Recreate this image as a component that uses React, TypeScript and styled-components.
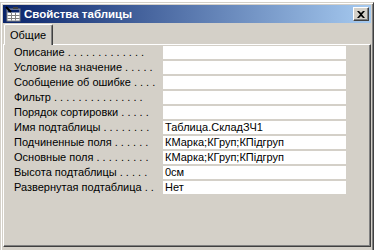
import { Fragment } from "react";
import styled, { createGlobalStyle } from "styled-components";

const GlobalStyle = createGlobalStyle`
    html, body {
        margin: 0;
        padding: 0;
        background: #ffffff;
        overflow: hidden;
    }
    body {
        font-family: "Liberation Sans", Arial, sans-serif;
        font-size: 11px;
        color: #000000;
    }
`

const Window = styled.div`
    margin-top: 2px;
    width: 374px;
    height: 248px;
    box-sizing: border-box;
    background: #d4d0c8;
    border-top: 1px solid #d4d0c8;
    border-left: 1px solid #d4d0c8;
    border-right: 1px solid #404040;
    box-shadow: inset 1px 1px 0 #ffffff, inset -1px 0 0 #808080;
    padding: 2px 2px 0 2px;
    display: flex;
    flex-direction: column;
`

const TitleBar = styled.div`
    height: 18px;
    background: linear-gradient(to right, #0a246a, #a6caf0);
    display: flex;
    align-items: center;
    padding: 0 2px 0 2px;
    gap: 3px;
`

const Title = styled.span`
    flex: 1;
    color: #ffffff;
    font-weight: bold;
    font-size: 11.5px;
    line-height: 18px;
    white-space: nowrap;
`

const CloseButton = styled.button`
    width: 16px;
    height: 14px;
    padding: 0;
    margin: 0;
    box-sizing: border-box;
    background: #d4d0c8;
    border-top: 1px solid #ffffff;
    border-left: 1px solid #ffffff;
    border-right: 1px solid #404040;
    border-bottom: 1px solid #404040;
    box-shadow: inset -1px -1px 0 #808080;
    display: flex;
    align-items: center;
    justify-content: center;
`

const Tabs = styled.div`
    display: flex;
    height: 20px;
    margin-top: 1px;
    padding-left: 1px;
    align-items: flex-end;
`

const Tab = styled.div<{ $active?: boolean }>`
    position: relative;
    z-index: 1;
    height: ${p => (p.$active ? 21 : 18)}px;
    margin-bottom: ${p => (p.$active ? -1 : 0)}px;
    box-sizing: border-box;
    padding: 3px 6px 0 5px;
    background: #d4d0c8;
    border-top: 1px solid #ffffff;
    border-left: 1px solid #ffffff;
    border-right: 1px solid #404040;
    border-top-left-radius: 2px;
    border-top-right-radius: 2px;
    box-shadow: inset -1px 0 0 #808080;
    line-height: 14px;
    white-space: nowrap;
`

const Panel = styled.div`
    height: 203px;
    box-sizing: border-box;
    border-top: 1px solid #ffffff;
    border-left: 1px solid #ffffff;
    border-right: 1px solid #404040;
    border-bottom: 1px solid #404040;
    box-shadow: inset -1px -1px 0 #808080;
    padding-top: 1px;
`

const PropertyGrid = styled.div`
    display: grid;
    grid-template-columns: 159px 183px;
    grid-auto-rows: 13px;
    row-gap: 2px;
`

const Label = styled.div`
    padding-left: 10px;
    line-height: 13px;
    white-space: nowrap;
    overflow: hidden;
`

const Value = styled.div`
    background: #ffffff;
    padding-left: 2px;
    line-height: 13px;
    white-space: nowrap;
    overflow: hidden;
`

const properties: [string, string][] = [
    ["Описание . . . . . . . . . . . . .", ""],
    ["Условие на значение . . . . .", ""],
    ["Сообщение об ошибке . . . .", ""],
    ["Фильтр . . . . . . . . . . . . . . .", ""],
    ["Порядок сортировки . . . . .", ""],
    ["Имя подтаблицы . . . . . . . .", "Таблица.СкладЗЧ1"],
    ["Подчиненные поля . . . . . .", "КМарка;КГруп;КПідгруп"],
    ["Основные поля . . . . . . . . .", "КМарка;КГруп;КПідгруп"],
    ["Высота подтаблицы . . . . .", "0см"],
    ["Развернутая подтаблица . .", "Нет"],
]

function TableIcon() {
    return (
        <svg width="16" height="16" viewBox="0 0 16 16">
            <rect x="2" y="3" width="13" height="12" fill="#ffffff" stroke="#808080" />
            <rect x="2.5" y="3.5" width="12" height="3" fill="#0a246a" />
            <path d="M2.5 9.5h12M2.5 12.5h12M6.5 6.5v8M10.5 6.5v8" stroke="#808080" />
            <path d="M1 1l5 5" stroke="#000000" strokeWidth="2" />
            <path d="M8 1h5v2H8z" fill="#404040" />
        </svg>
    )
}

export default function App() {
    return (
        <>
            <GlobalStyle />
            <Window>
                <TitleBar>
                    <TableIcon />
                    <Title>Свойства таблицы</Title>
                    <CloseButton>
                        <svg width="8" height="7" viewBox="0 0 8 7">
                            <path d="M0 0h2l2 2 2-2h2L5 3.5 8 7H6L4 5 2 7H0l3-3.5z" fill="#000000" />
                        </svg>
                    </CloseButton>
                </TitleBar>
                <Tabs>
                    <Tab $active>Общие</Tab>
                </Tabs>
                <Panel>
                    <PropertyGrid>
                        {properties.map(([label, value]) => (
                            <Fragment key={label}>
                                <Label>{label}</Label>
                                <Value>{value}</Value>
                            </Fragment>
                        ))}
                    </PropertyGrid>
                </Panel>
            </Window>
        </>
    );
}
